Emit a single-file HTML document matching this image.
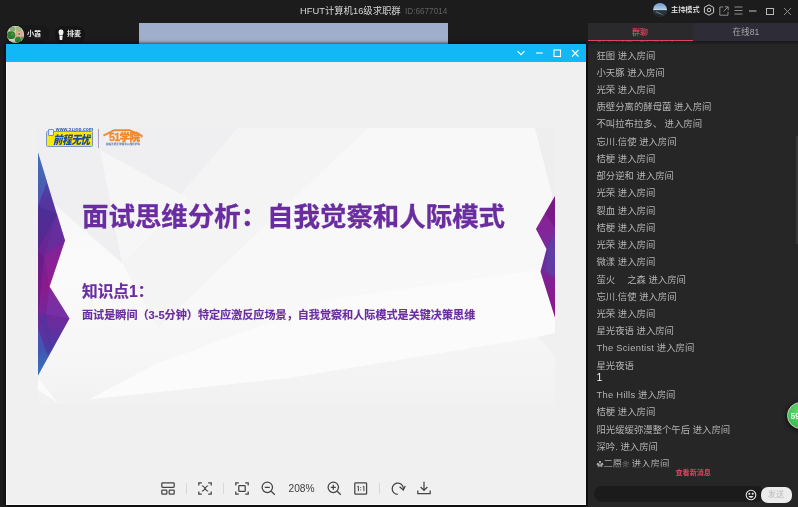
<!DOCTYPE html>
<html lang="zh-CN">
<head>
<meta charset="utf-8">
<title>HFUT计算机16级求职群</title>
<style>
*{box-sizing:border-box;margin:0;padding:0}
html,body{width:798px;height:507px;overflow:hidden;background:#1c1c1c}
body{position:relative;font-family:"Liberation Sans","Noto Sans CJK SC",sans-serif;color:#ccc;-webkit-font-smoothing:antialiased}
.abs{position:absolute}
body>*{will-change:transform}
.t{position:absolute;white-space:nowrap;line-height:1}
/* top bar */
#title{left:300px;top:6.8px;font-size:9.35px;color:#d6d6d6}
#rid{left:405px;top:7.7px;font-size:8.2px;color:#606060}
#bluegray{left:139px;top:23px;width:309px;height:22px;background:#9fafcb}
/* chips */
.chip{position:absolute;border-radius:8px;background:#181818}
/* window */
#win{left:6px;top:44px;width:580px;height:461px;background:#f0f0f0;box-shadow:0 0 4px .5px #000}
#wbar{left:0;top:0;width:580px;height:18px;background:#12b7f5}
/* slide */
#slide{left:31.5px;top:83.5px;width:517px;height:277px;overflow:hidden;background:#f7f7f7}
/* right panel */
#panel{left:588px;top:23px;width:210px;height:484px;background:#262626;overflow:hidden}
#tab1{left:0;top:0;width:105px;height:18px;background:#2a2a2c;border-bottom:1.5px solid #e0435f}
#tab2{left:105px;top:0;width:105px;height:18px;background:#2e2d37}
.msg{position:absolute;left:8.5px;font-size:9.37px;color:#b4b4b4;white-space:nowrap;line-height:14px}
</style>
</head>
<body>
<!-- top title -->
<div class="t" id="title">HFUT计算机16级求职群</div>
<div class="t" id="rid">ID:6677014</div>
<div class="abs" id="bluegray"></div>

<!-- left chips -->
<div class="chip" style="left:6px;top:25px;width:43px;height:18px"></div>
<div class="abs" id="av1" style="left:6.800px;top:25.600px;width:17.300px;height:17.300px;border-radius:50%;overflow:hidden;background:#cfcdb8">
<svg width="17.300" height="17.300" viewBox="0 0 17 17"><rect width="17" height="17" fill="#cdcbb4"/><circle cx="5.500" cy="3" r="2.600" fill="#86ad74"/><circle cx="11.500" cy="2.600" r="2.800" fill="#9dbb7e"/><ellipse cx="4" cy="9" rx="4.200" ry="3.800" fill="#2f7a2c"/><circle cx="5.500" cy="8" r="1.600" fill="#44933c"/><rect x="8.800" y="5" width="6.400" height="5.800" rx=".6" fill="#dea08c"/><rect x="10.200" y="6.300" width="3.400" height="3" fill="#e9c2a8"/><rect x="11" y="6.900" width="1.900" height="1.800" fill="#4f9a48"/><circle cx="10.800" cy="13.600" r="3" fill="#2e8530"/><circle cx="15" cy="12" r="1.800" fill="#7d8f62"/><ellipse cx="4.500" cy="14.500" rx="3" ry="1.800" fill="#d9d6c6"/></svg>
</div>
<div class="t" style="left:27.300px;top:31.200px;font-size:7.100px;font-weight:700;color:#e6e6e6">小嚣</div>
<div class="chip" style="left:54.5px;top:26px;width:29.5px;height:17.5px;background:#151515"></div>
<svg class="abs" style="left:57px;top:29px" width="8" height="12" viewBox="0 0 8 12"><rect x="1.6" y="0.6" width="4.8" height="5.6" rx="2.2" fill="#f0f0f0"/><path d="M2.3 6.6h3.4l-.5 4.4h-2.4z" fill="#f0f0f0"/></svg>
<div class="t" style="left:67px;top:31.200px;font-size:7.100px;font-weight:700;color:#e6e6e6">排麦</div>

<!-- top right controls -->
<div class="abs" id="av2" style="left:652.500px;top:3px;width:14.200px;height:13.800px;border-radius:50%;overflow:hidden;background:#2a3438">
<svg width="14.200" height="13.800" viewBox="0 0 14 14"><defs><linearGradient id="sky" x1="0" y1="0" x2="0" y2="1"><stop offset="0" stop-color="#6f9cd2"/><stop offset="1" stop-color="#b4cde6"/></linearGradient></defs><rect width="14" height="7" fill="url(#sky)"/><rect y="6.600" width="14" height=".9" fill="#dfe8ee"/><rect y="7.400" width="14" height="6.600" fill="#27343a"/><path d="M3 8.400l8 3.800-.4 1L2.600 9.200z" fill="#8b989c" opacity=".8"/><rect y="11.500" width="14" height="2.500" fill="#1c2326" opacity=".7"/></svg>
</div>
<div class="t" style="left:671px;top:7px;font-size:7.150px;font-weight:500;color:#ececec">主持模式</div>
<svg class="abs" style="left:703px;top:4px" width="12" height="12" viewBox="0 0 12 12" fill="none" stroke="#d0d0d0" stroke-width="1"><path d="M6 .8l4.6 2.6v5.2L6 11.2 1.4 8.600V3.400z"/><circle cx="6" cy="6" r="1.8"/></svg>
<svg class="abs" style="left:718.700px;top:5.700px" width="10" height="10" viewBox="0 0 10 10" fill="none" stroke="#8c8c8c" stroke-width="1"><path d="M4.200 1H.8v8.200h8.200V5.800"/><path d="M5.800.8h3.400v3.400M9 1L4.500 5.500"/></svg>
<svg class="abs" style="left:734px;top:6.200px" width="9" height="9" viewBox="0 0 9 9" stroke="#8c8c8c" stroke-width="1"><path d="M.5 1h8M.5 4.500h8M.5 8h8"/></svg>
<svg class="abs" style="left:749px;top:10px" width="8" height="2" viewBox="0 0 8 2" stroke="#c4c4c4" stroke-width="1"><path d="M0 1h7.500"/></svg>
<svg class="abs" style="left:766px;top:8px" width="9" height="9" viewBox="0 0 9 9" fill="none" stroke="#b8b8b8" stroke-width="1"><rect x=".5" y=".5" width="7" height="6"/></svg>
<svg class="abs" style="left:783px;top:6.500px" width="9" height="9" viewBox="0 0 9 9" stroke="#8c8c8c" stroke-width="1"><path d="M1 1l7 7M8 1L1 8"/></svg>

<!-- main window -->
<div class="abs" id="win">
  <div class="abs" id="wbar">
    <svg class="abs" style="left:510px;top:5px" width="10" height="8" viewBox="0 0 10 8" fill="none" stroke="#fff" stroke-width="1.100"><path d="M1.500 2.200l3.500 3.500 3.500-3.500"/></svg>
    <svg class="abs" style="left:529px;top:8px" width="9" height="2" viewBox="0 0 9 2" stroke="#fff" stroke-width="1.100"><path d="M1 1h6.800"/></svg>
    <svg class="abs" style="left:547px;top:5px" width="9" height="9" viewBox="0 0 9 9" fill="none" stroke="#fff" stroke-width="1.100"><rect x="1" y="1" width="6.500" height="6.500"/></svg>
    <svg class="abs" style="left:565px;top:5px" width="9" height="9" viewBox="0 0 9 9" stroke="#fff" stroke-width="1.100"><path d="M1 1l6.500 6.500M7.500 1L1 7.500"/></svg>
  </div>
  <div class="abs" style="left:0;top:18px;width:1px;height:443px;background:#fbfbfb"></div><div class="abs" style="left:0;top:460px;width:580px;height:1px;background:#fbfbfb"></div>
  <div class="abs" id="slide">
    <svg class="abs" style="left:0;top:0" width="517" height="277" viewBox="0 0 517 277">
      <defs>
        <linearGradient id="gl" x1="0" y1="0" x2="0" y2="1">
          <stop offset="0" stop-color="#3a66b0"/><stop offset=".22" stop-color="#5336a0"/><stop offset=".42" stop-color="#6a2594"/><stop offset=".6" stop-color="#8b1a8c"/><stop offset=".75" stop-color="#6d2a9c"/><stop offset=".88" stop-color="#4b3aa4"/><stop offset="1" stop-color="#3470b4"/>
        </linearGradient>
        <linearGradient id="gr" x1="0" y1="0" x2="0" y2="1">
          <stop offset="0" stop-color="#8a1a8a"/><stop offset=".3" stop-color="#7e2496"/><stop offset=".5" stop-color="#6a30a0"/><stop offset=".72" stop-color="#7a2596"/><stop offset="1" stop-color="#8c148a"/>
        </linearGradient>
        <linearGradient id="bgf" x1="0" y1="0" x2="0" y2="1">
          <stop offset="0" stop-color="#f4f4f5"/><stop offset=".5" stop-color="#fafafa"/><stop offset=".85" stop-color="#f6f6f6"/><stop offset="1" stop-color="#f1f1f1"/>
        </linearGradient>
      <linearGradient id="bgb" x1="0" y1="0" x2="0" y2="1"><stop offset="0" stop-color="#f6f6f6"/><stop offset="1" stop-color="#f1f1f1"/></linearGradient>
      </defs>
      <rect width="517" height="277" fill="url(#bgf)"/>
      <polygon points="0,0 200,0 84,135 0,62" fill="#efeff1"/>
      <polygon points="200,0 330,0 120,200 84,135" fill="#f4f4f5"/>
      <polygon points="62,22 150,70 84,135" fill="#f7f7f8" opacity=".8"/>
      <polygon points="330,0 497,0 514,66 517,140 300,170 120,200" fill="#f8f8f8"/>
      <polygon points="497,0 517,0 517,140 514,66" fill="#eeeeef"/>
      <polygon points="0,250 0,277 40,277 120,235 300,170 517,140 517,205 500,209 252,250 20,275" fill="#fbfbfb"/>
      <polygon points="0,277 0,262 20,275 252,250 500,209 517,228 517,277" fill="url(#bgb)"/>
      <polygon points="500,209 517,205 517,228" fill="#f0f0f1"/>
      <polygon points="0,24.500 27,112.500 11.500,158.500 31.500,190.500 0,247.500" fill="url(#gl)"/>
      <polygon points="517,68 498,101 508.500,121 502.500,143.500 517,189.500" fill="url(#gr)"/>
      <polygon points="0,24.500 9,54 0,78" fill="#4c7cc4" opacity=".45"/>
      <polygon points="0,78 19,86 0,122" fill="#3c2a8c" opacity=".4"/>
      <polygon points="19,86 27,112.500 6,128" fill="#6a34a4" opacity=".45"/>
      <polygon points="27,112.500 6,128 11.500,158.500" fill="#a3229c" opacity=".4"/>
      <polygon points="0,122 6,128 0,188" fill="#5a1a80" opacity=".4"/>
      <polygon points="11.500,158.500 31.500,190.500 8,186" fill="#7c3cb4" opacity=".45"/>
      <polygon points="0,188 8,186 14,222" fill="#3e3a9c" opacity=".4"/>
      <polygon points="0,200 10,229 0,247.500" fill="#3a7cc4" opacity=".4"/>
      <polygon points="517,68 507,85 517,100" fill="#6a1478" opacity=".4"/>
      <polygon points="498,101 508.500,121 517,100 507,85" fill="#8a2aa0" opacity=".35"/>
      <polygon points="517,100 510,121 508,143.500 517,150" fill="#4a52b0" opacity=".4"/>
      <polygon points="502.500,143.500 517,150 517,189.500" fill="#96148c" opacity=".35"/>
    </svg>
    <!-- logos -->
    <div class="abs" style="left:8.700px;top:3.400px;width:47.300px;height:16.600px;background:#ffe70a;border:.8px solid #7f93b8;border-radius:1.500px"></div>
    <div class="abs" style="left:10px;top:1.300px;width:6.300px;height:7.600px;background:#e9effa;border:.8px solid #6f8fc8;border-radius:1px"></div>
    <div class="t" style="left:18.300px;top:.1px;font-size:4.900px;font-weight:700;color:#2a55a8;letter-spacing:.05px">www.51job.com</div>
    <div class="t" style="left:15.600px;top:6px;font-size:11.600px;font-weight:900;font-style:italic;color:#1b4aa2;letter-spacing:-.5px;transform:scaleX(.83);transform-origin:0 0">前程无忧</div>
    <div class="abs" style="left:60.700px;top:1.300px;width:.9px;height:19.400px;background:#ab9fbe"></div>
    <svg class="abs" style="left:64px;top:0" width="42" height="10" viewBox="0 0 42 10" fill="none" stroke="#f08a2c" stroke-width="1.900" stroke-linejoin="round"><path d="M1.400 7.600L12.500 2.200H27.500L39.600 7.600v1.800"/></svg>
    <div class="t" style="left:71.400px;top:4.900px;font-size:10.600px;font-weight:900;color:#f08a2c;letter-spacing:-.55px;-webkit-text-stroke:.3px #f08a2c">51学院</div>
    <div class="t" style="left:68.400px;top:16.600px;font-size:2.620px;font-weight:700;color:#3a62aa">前程无忧全球领导人成长学院</div>
    <!-- texts -->
    <div class="t" id="stitle" style="left:44.500px;top:76px;font-size:26.450px;font-weight:700;color:#6a2da0;-webkit-text-stroke:.3px #6a2da0">面试思维分析：自我觉察和人际模式</div>
    <div class="t" id="kp" style="left:44.500px;top:156.500px;font-size:15.700px;font-weight:700;color:#6a2da0;-webkit-text-stroke:.2px #6a2da0">知识点1：</div>
    <div class="t" id="body1" style="left:44.500px;top:182.600px;font-size:11.100px;font-weight:700;color:#6a2da0;-webkit-text-stroke:.15px #6a2da0">面试是瞬间（3-5分钟）特定应激反应场景，自我觉察和人际模式是关键决策思维</div>
  </div>
  <div class="abs" id="tbar" style="left:0;top:430px;width:580px;height:28px">
    <!-- layout icon center x=168-6=162 , y=488-44-430=14 -->
    <svg class="abs" style="left:155px;top:7.500px" width="14" height="13" viewBox="0 0 14 13" fill="none" stroke="#444" stroke-width="1.250"><rect x=".8" y=".8" width="12.400" height="4.600" rx=".8"/><rect x=".8" y="8" width="5" height="4.200" rx=".8"/><rect x="8.200" y="8" width="5" height="4.200" rx=".8"/></svg>
    <div class="abs" style="left:180px;top:8.500px;width:1px;height:11px;background:#d8d8d8"></div>
    <svg class="abs" style="left:192px;top:7.500px" width="14" height="13" viewBox="0 0 14 13" fill="none" stroke="#444" stroke-width="1.250"><path d="M.8 3.600V.8h3M10.200.8h3v2.800M13.200 9.400v2.800h-3M3.800 12.200h-3V9.400"/><path d="M3.800 3.800c1.200 0 2.200.8 3.200 2.700s2 2.700 3.200 2.700M10.200 3.800c-1.200 0-2.200.8-3.200 2.700s-2 2.700-3.200 2.700" stroke-width="1.100"/></svg>
    <div class="abs" style="left:217px;top:8.500px;width:1px;height:11px;background:#d8d8d8"></div>
    <svg class="abs" style="left:228.500px;top:7.500px" width="14" height="13" viewBox="0 0 14 13" fill="none" stroke="#444" stroke-width="1.250"><path d="M.8 3.600V.8h3M10.200.8h3v2.800M13.200 9.400v2.800h-3M3.800 12.200h-3V9.400"/><rect x="3.800" y="3.600" width="6.400" height="5.800" rx=".6"/></svg>
    <svg class="abs" style="left:255px;top:7px" width="15" height="15" viewBox="0 0 15 15" fill="none" stroke="#444" stroke-width="1.250"><circle cx="6.300" cy="6.300" r="5.200"/><path d="M3.800 6.300h5M10.200 10.200l3.600 3.600"/></svg>
    <div class="t" id="pct" style="left:282.500px;top:10px;font-size:10.200px;color:#3c3c3c">208%</div>
    <svg class="abs" style="left:320.500px;top:7px" width="15" height="15" viewBox="0 0 15 15" fill="none" stroke="#444" stroke-width="1.250"><circle cx="6.300" cy="6.300" r="5.200"/><path d="M3.800 6.300h5M6.300 3.800v5M10.200 10.200l3.600 3.600"/></svg>
    <svg class="abs" style="left:348px;top:7.500px" width="14" height="13" viewBox="0 0 14 13" fill="none" stroke="#444" stroke-width="1.250"><rect x=".8" y=".8" width="11.800" height="11.400" rx=".8"/><path d="M3.300 4.800l1.100-.7v5M8.800 4.800l1.100-.7v5" stroke-width="1"/><path d="M6.700 5.200v.9M6.700 7.500v.9" stroke-width="1"/></svg>
    <div class="abs" style="left:373px;top:8.500px;width:1px;height:11px;background:#d8d8d8"></div>
    <svg class="abs" style="left:384.500px;top:7px" width="15" height="15" viewBox="0 0 15 15" fill="none" stroke="#444" stroke-width="1.250"><path d="M6.800 13.400a5.600 5.600 0 1 1 5.500-4.600"/><path d="M8.600 5.700l3.700 3.300 2-4"/></svg>
    <svg class="abs" style="left:410.500px;top:7px" width="14" height="14" viewBox="0 0 14 14" fill="none" stroke="#444" stroke-width="1.250"><path d="M7 .8v8.400M3.600 6l3.400 3.400L10.400 6M.8 9.400v3.200h12.400V9.400"/></svg>
  </div>
</div>

<!-- right panel -->
<div class="abs" id="panel">
  <div class="msg" style="top:7.9px">群聊消息 进入房间</div>
  <div class="msg" style="top:25.5px">狂图 进入房间</div>
  <div class="msg" style="top:42.7px">小天豚 进入房间</div>
  <div class="msg" style="top:60.0px">光荣 进入房间</div>
  <div class="msg" style="top:77.2px">质壁分离的酵母菌 进入房间</div>
  <div class="msg" style="top:94.4px">不叫拉布拉多、 进入房间</div>
  <div class="msg" style="top:111.7px">忘川.信使 进入房间</div>
  <div class="msg" style="top:128.9px">桔梗 进入房间</div>
  <div class="msg" style="top:146.1px">部分逆和 进入房间</div>
  <div class="msg" style="top:163.4px">光荣 进入房间</div>
  <div class="msg" style="top:180.6px">裂血 进入房间</div>
  <div class="msg" style="top:197.8px">桔梗 进入房间</div>
  <div class="msg" style="top:215.0px">光荣 进入房间</div>
  <div class="msg" style="top:232.3px">微漾 进入房间</div>
  <div class="msg" style="top:249.5px">萤火　 之森 进入房间</div>
  <div class="msg" style="top:266.7px">忘川.信使 进入房间</div>
  <div class="msg" style="top:284.0px">光荣 进入房间</div>
  <div class="msg" style="top:301.2px">星光夜语 进入房间</div>
  <div class="msg" style="top:318.4px"><span style="letter-spacing:.28px">The Scientist</span> 进入房间</div>
  <div class="msg" style="top:335.6px">星光夜语</div>
  <div class="msg" style="top:347.3px;color:#f4f4f4;font-size:10.500px">1</div>
  <div class="msg" style="top:365.2px"><span style="letter-spacing:.28px">The Hills</span> 进入房间</div>
  <div class="msg" style="top:382.4px">桔梗 进入房间</div>
  <div class="msg" style="top:399.7px">阳光缓缓弥漫整个午后 进入房间</div>
  <div class="msg" style="top:416.9px">深吟. 进入房间</div>
  <div class="msg" style="top:434.0px"><span style="font-size:7px">✿</span>二愿<span style="font-size:7px">❀</span> 进入房间</div>
  <div class="abs" style="left:0;top:445px;width:210px;height:39px;background:#262626"></div>
  <div class="abs" style="left:0;top:443px;width:210px;height:2px;background:linear-gradient(rgba(38,38,38,0),#262626)"></div>
  <div class="t" id="newmsg" style="left:87.500px;top:447px;font-size:7.100px;font-weight:700;color:#e0435f">查看新消息</div>
  <div class="abs" style="left:6px;top:463px;width:170px;height:16.300px;border-radius:8px;background:#1b1b1b"></div>
  <svg class="abs" style="left:157px;top:466px" width="12" height="12" viewBox="0 0 12 12" fill="none" stroke="#e4e4e4" stroke-width="1.100"><circle cx="6" cy="6" r="4.800"/><circle cx="4.300" cy="4.800" r=".5" fill="#e4e4e4"/><circle cx="7.700" cy="4.800" r=".5" fill="#e4e4e4"/><path d="M3.500 7c.6 1.400 1.600 1.800 2.500 1.800s1.900-.4 2.500-1.800z" fill="#e4e4e4" stroke="none"/></svg>
  <div class="abs" style="left:172.500px;top:464px;width:31.500px;height:15.500px;border-radius:7px;background:#ececec"></div>
  <div class="t" id="send" style="left:180px;top:468px;font-size:8px;color:#b8b8b8">发送</div>
  <div class="abs" style="left:199px;top:379px;width:27px;height:27px;border-radius:50%;background:radial-gradient(circle at 50% 35%,#5fdc6a,#2fb445);border:1.500px solid #c8d0c8;box-shadow:0 1px 4px 1px rgba(0,0,0,.6)"></div>
  <div class="t" style="left:202.500px;top:388.500px;font-size:8.500px;font-weight:700;color:#e8ffe8">59</div>
  <div class="abs" style="left:208px;top:112.500px;width:2px;height:108px;background:#383838"></div>
  <div class="abs" style="left:0;top:18px;width:210px;height:4px;background:linear-gradient(rgba(20,20,20,.75),rgba(20,20,20,0))"></div>
  <div class="abs" id="tab1"><div class="t" id="t1" style="left:44px;top:5.500px;font-size:8px;font-weight:500;color:#e0435f">群聊</div></div>
  <div class="abs" id="tab2"><div class="t" id="t2" style="left:39.500px;top:5px;font-size:8.600px;color:#a4a4a8">在线81</div></div>
</div>
</body>
</html>
